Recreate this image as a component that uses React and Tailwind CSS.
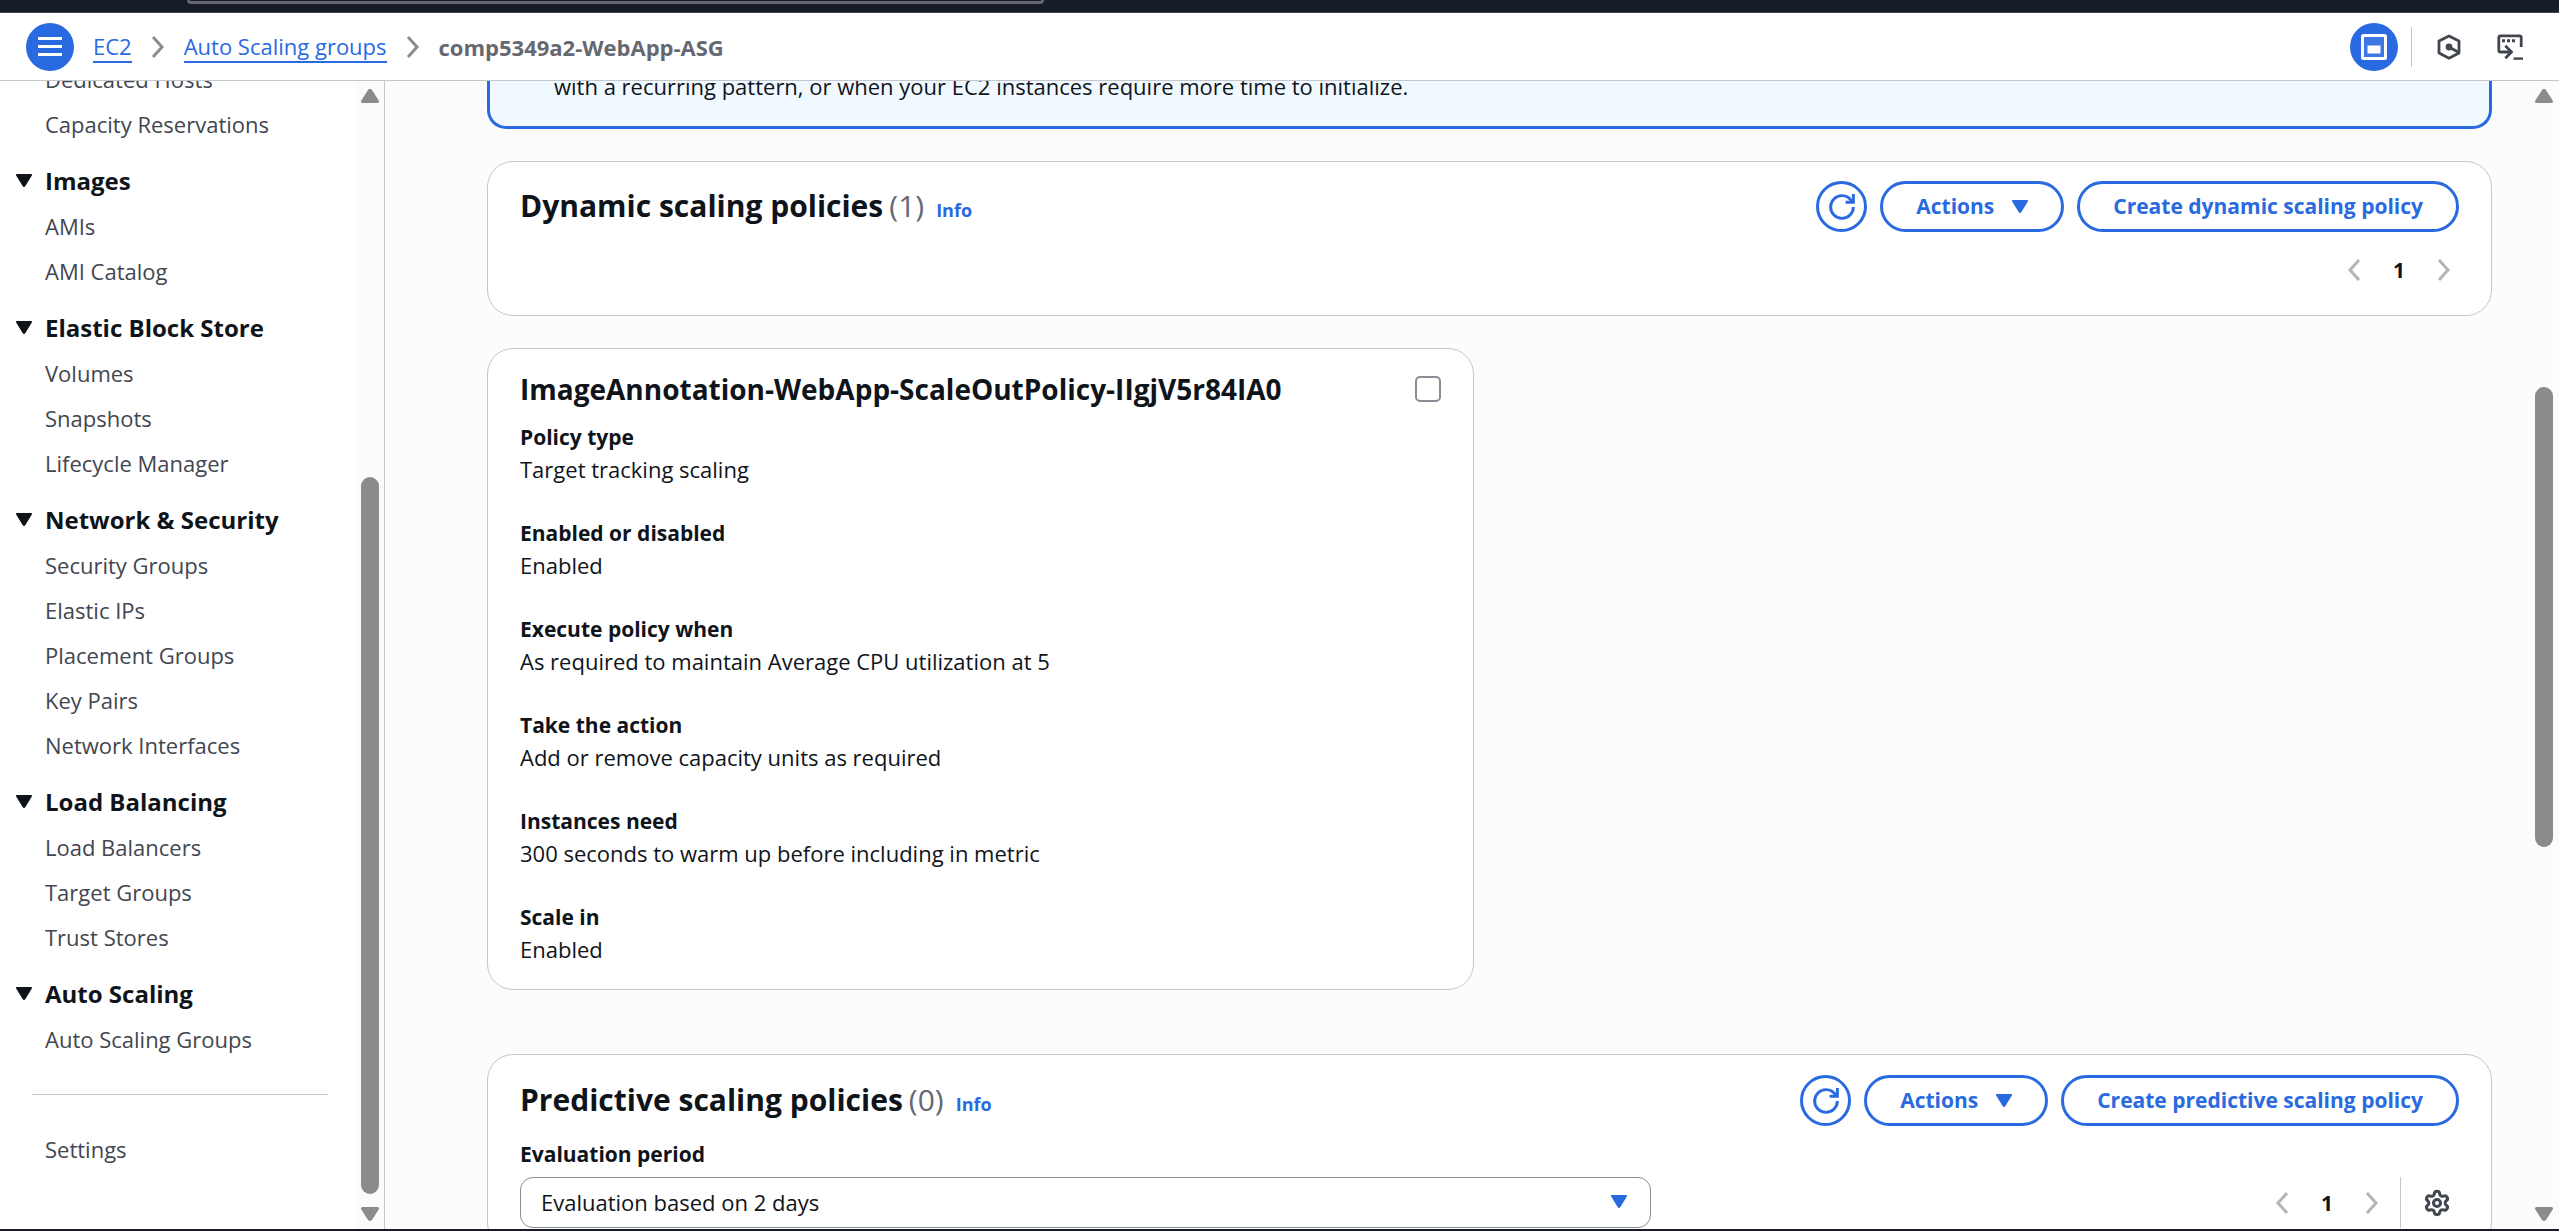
import { Settings } from "lucide-react";

const groups = [
  { title: "Images", items: ["AMIs", "AMI Catalog"] },
  { title: "Elastic Block Store", items: ["Volumes", "Snapshots", "Lifecycle Manager"] },
  {
    title: "Network & Security",
    items: ["Security Groups", "Elastic IPs", "Placement Groups", "Key Pairs", "Network Interfaces"],
  },
  { title: "Load Balancing", items: ["Load Balancers", "Target Groups", "Trust Stores"] },
  { title: "Auto Scaling", items: ["Auto Scaling Groups"] },
];

const policy = [
  ["Policy type", "Target tracking scaling"],
  ["Enabled or disabled", "Enabled"],
  ["Execute policy when", "As required to maintain Average CPU utilization at 5"],
  ["Take the action", "Add or remove capacity units as required"],
  ["Instances need", "300 seconds to warm up before including in metric"],
  ["Scale in", "Enabled"],
];

function Caret({ className = "" }) {
  return (
    <svg viewBox="0 0 16 13" className={`h-[13px] w-4 shrink-0 fill-current ${className}`} aria-hidden="true">
      <path d="M1 0h14c.9 0 1.3 1 .7 1.7L9.4 12c-.7 1.2-2.1 1.2-2.8 0L.3 1.7C-.3 1 .1 0 1 0z" />
    </svg>
  );
}

function Chevron({ left = false, className = "" }) {
  return (
    <svg
      viewBox="0 0 14 22"
      className={`h-[22px] w-3.5 shrink-0 fill-none stroke-current ${className}`}
      strokeWidth="3"
      aria-hidden="true"
    >
      <path d={left ? "M12 1L3 11l9 10" : "M2 1l9 10-9 10"} />
    </svg>
  );
}

function RefreshIcon() {
  return (
    <svg viewBox="0 0 16 16" className="size-[26px] fill-none stroke-current" strokeWidth="1.8" aria-hidden="true">
      <path d="M15 8a7 7 0 1 1-7-7c2.9 0 5 1.5 6.4 4" />
      <path d="M10.2 5.1H15V0" />
    </svg>
  );
}

function PanelIcon() {
  return (
    <svg viewBox="0 0 26 26" className="size-[26px]" aria-hidden="true">
      <rect x="1.5" y="1.5" width="23" height="23" rx="1" fill="#3f78e4" stroke="#fff" strokeWidth="3" />
      <rect x="6.5" y="11.5" width="13" height="8" fill="#fff" />
    </svg>
  );
}

function HexagonIcon() {
  return (
    <svg viewBox="0 0 24 26" className="h-[26px] w-6 fill-none stroke-current" strokeWidth="2.8" aria-hidden="true">
      <path d="M12 2l10 5v12l-10 5.2L2 19V7z" strokeLinejoin="round" />
      <circle cx="12" cy="13" r="3.4" className="fill-current stroke-none" />
      <path d="M12 13l9 5" strokeWidth="2.6" />
    </svg>
  );
}

function CloudShellIcon() {
  return (
    <svg viewBox="0 0 26 26" className="size-[26px] fill-none stroke-current" strokeWidth="2.8" aria-hidden="true">
      <path d="M24.2 13V3.4c0-1-.6-1.6-1.6-1.6H3.4c-1 0-1.6.6-1.6 1.6v13c0 1 .6 1.6 1.6 1.6H15" />
      <path d="M8.3 11.8l6.2 6.2-6.2 6.2" />
      <path d="M16.5 24.6H26" strokeWidth="2.4" />
      <path d="M5 6.7h3M10 6.7h3M15 6.7h3" strokeWidth="3" />
    </svg>
  );
}

function ScrollArrow({ down = false }) {
  return (
    <svg viewBox="0 0 18 14" className="h-3.5 w-[18px] shrink-0 fill-[#8b8b8b]" aria-hidden="true">
      <path
        d={
          down
            ? "M1.5 0h15c1.3 0 1.9 1.5 1.2 2.6l-6.4 10c-1.1 1.8-3.5 1.8-4.6 0L.3 2.6C-.4 1.5.2 0 1.5 0z"
            : "M1.5 14h15c1.3 0 1.9-1.5 1.2-2.6l-6.4-10c-1.1-1.8-3.5-1.8-4.6 0l-6.4 10C-.4 12.5.2 14 1.5 14z"
        }
      />
    </svg>
  );
}

function NavLink({ children }) {
  return (
    <li>
      <a href="#" className="block pl-[45px] text-[22px] leading-[45px] text-[#424650]">
        {children}
      </a>
    </li>
  );
}

function OutlineButton({ children }) {
  return (
    <button
      type="button"
      className="flex h-[51px] items-center gap-[18px] rounded-full border-[3px] border-[#2a6ae0] bg-white px-[33px] text-[21px] font-bold whitespace-nowrap text-[#2a6ae0]"
    >
      {children}
    </button>
  );
}

function Pagination() {
  return (
    <nav aria-label="Pagination" className="flex items-center gap-8 px-2 text-[#b4b4bb]">
      <button type="button" aria-label="Previous page" disabled>
        <Chevron left />
      </button>
      <span className="text-[21px] leading-8 font-bold text-[#0f141a]">1</span>
      <button type="button" aria-label="Next page" disabled>
        <Chevron />
      </button>
    </nav>
  );
}

function PolicyHeader({ title, count, create }) {
  return (
    <div className="flex items-center justify-between gap-8">
      <h2 className="flex items-baseline pb-0.5 text-[30px] leading-9 font-bold text-[#0f141a]">
        {title}
        <span className="ml-1.5 font-normal text-[#656871]">({count})</span>
        <a href="#" className="ml-3 text-lg font-bold text-[#2a6ae0]">
          Info
        </a>
      </h2>
      <div className="flex items-center gap-[13px]">
        <button
          type="button"
          aria-label="Refresh"
          className="flex size-[51px] items-center justify-center rounded-full border-[3px] border-[#2a6ae0] bg-white text-[#2a6ae0]"
        >
          <RefreshIcon />
        </button>
        <OutlineButton>
          Actions
          <Caret />
        </OutlineButton>
        <OutlineButton>{create}</OutlineButton>
      </div>
    </div>
  );
}

function Sidebar() {
  return (
    <aside className="flex w-[385px] shrink-0 border-r border-[#c6c6cd] bg-white">
      <nav aria-label="EC2" className="flex min-w-0 flex-1 flex-col justify-end overflow-hidden pb-[57px]">
        <ul>
          <NavLink>Dedicated Hosts</NavLink>
          <NavLink>Capacity Reservations</NavLink>
        </ul>
        {groups.map((g) => (
          <section key={g.title} className="pt-[11px]">
            <button
              type="button"
              aria-expanded="true"
              className="mb-px flex items-center gap-[13px] pl-4 text-2xl leading-[45px] font-bold text-[#0f141a]"
            >
              <Caret />
              {g.title}
            </button>
            <ul>
              {g.items.map((item) => (
                <NavLink key={item}>{item}</NavLink>
              ))}
            </ul>
          </section>
        ))}
        <hr className="mt-8 mr-[27px] mb-8 ml-8 border-[#c6c6cd]" />
        <ul>
          <NavLink>Settings</NavLink>
        </ul>
      </nav>
      <div className="flex w-[29px] shrink-0 flex-col items-center bg-[#fbfbfb] py-2" aria-hidden="true">
        <ScrollArrow />
        <div className="grow-[374]" />
        <div className="w-[18px] grow-[716] rounded-full bg-[#8b8b8b]" />
        <div className="h-[13px]" />
        <ScrollArrow down />
      </div>
    </aside>
  );
}

export default function App() {
  return (
    <div className="flex h-screen flex-col overflow-hidden bg-[#fcfcfc] font-['Open_Sans',sans-serif] text-[#0f141a]">
      <div className="h-[13px] shrink-0 border-b border-[#424650] bg-[#161d26] pl-[187px]">
        <div className="h-1 w-[857px] rounded-b-md border-[3px] border-t-0 border-[#656871]" />
      </div>

      <header className="flex h-[68px] shrink-0 items-center justify-between border-b border-[#c6c6cd] bg-white pr-9 pl-[26px]">
        <div className="flex items-center">
          <button
            type="button"
            aria-label="Open navigation"
            className="flex size-12 items-center justify-center rounded-full bg-[#2a6ae0]"
          >
            <svg viewBox="0 0 24 20" className="h-5 w-6 fill-white" aria-hidden="true">
              <path d="M0 0h24v3H0zM0 8h24v3H0zM0 16h24v3H0z" />
            </svg>
          </button>
          <nav aria-label="Breadcrumbs" className="ml-[19px] flex items-center gap-[19px] text-[22px] leading-[30px]">
            <a href="#" className="border-b-2 border-[#2a6ae0] text-[#2a6ae0]">EC2</a>
            <Chevron className="text-[#8c8c94]" />
            <a href="#" className="border-b-2 border-[#2a6ae0] text-[#2a6ae0]">Auto Scaling groups</a>
            <Chevron className="text-[#8c8c94]" />
            <span className="font-bold text-[#656871]">comp5349a2-WebApp-ASG</span>
          </nav>
        </div>
        <div className="flex items-center text-[#424650]">
          <button
            type="button"
            aria-label="Split panel"
            className="flex size-12 items-center justify-center rounded-full bg-[#2a6ae0]"
          >
            <PanelIcon />
          </button>
          <div className="mr-[25px] ml-[13px] h-10 w-px bg-[#c6c6cd]" />
          <button type="button" aria-label="Amazon Q">
            <HexagonIcon />
          </button>
          <button type="button" aria-label="CloudShell" className="ml-9">
            <CloudShellIcon />
          </button>
        </div>
      </header>

      <div className="flex min-h-0 flex-1">
        <Sidebar />

        <main className="min-w-0 flex-1 overflow-hidden pr-[37px] pl-[102px]">
          <div className="-mt-[11px] rounded-b-[19px] border-[3px] border-t-0 border-[#2a6ae0] bg-[#f0f9ff] px-16 pb-6 text-[22px] leading-8">
            with a recurring pattern, or when your EC2 instances require more time to initialize.
          </div>

          <section className="mt-8 rounded-[26px] border border-[#c6c6cd] bg-white px-8 pt-[19px] pb-5">
            <PolicyHeader title="Dynamic scaling policies" count={1} create="Create dynamic scaling policy" />
            <div className="mt-3 flex h-[51px] items-center justify-end">
              <Pagination />
            </div>
          </section>

          <div className="mt-8 grid grid-cols-2 gap-8">
            <article className="rounded-[26px] border border-[#c6c6cd] bg-white px-8 pt-[22px] pb-6">
              <div className="flex items-start justify-between">
                <h3 className="text-[28px] leading-9 font-bold">
                  <label htmlFor="select-policy">ImageAnnotation-WebApp-ScaleOutPolicy-IIgjV5r84IA0</label>
                </h3>
                <input
                  id="select-policy"
                  type="checkbox"
                  className="mt-[5px] size-[26px] appearance-none rounded-[5px] border-2 border-[#8c8c94] bg-white"
                />
              </div>
              <dl className="mt-3.5 flex flex-col gap-8 text-[22px] leading-8">
                {policy.map(([term, value]) => (
                  <div key={term}>
                    <dt className="text-[21px] font-bold">{term}</dt>
                    <dd>{value}</dd>
                  </div>
                ))}
              </dl>
            </article>
          </div>

          <section className="mt-16 rounded-[26px] border border-[#c6c6cd] bg-white px-8 py-5">
            <PolicyHeader title="Predictive scaling policies" count={0} create="Create predictive scaling policy" />
            <div className="mt-3 flex items-end justify-between">
              <div className="w-7/12">
                <label htmlFor="evaluation-period" className="block text-[21px] leading-8 font-bold">
                  Evaluation period
                </label>
                <div className="relative mt-[7px]">
                  <select
                    id="evaluation-period"
                    className="block h-[51px] w-full appearance-none rounded-[13px] border border-[#8c8c94] bg-white px-5 text-[22px]"
                  >
                    <option>Evaluation based on 2 days</option>
                  </select>
                  <Caret className="pointer-events-none absolute top-[18px] right-6 text-[#2a6ae0]" />
                </div>
              </div>
              <div className="flex h-[51px] items-center">
                <Pagination />
                <div className="ml-[13px] h-full w-px bg-[#c6c6cd]" />
                <button type="button" aria-label="Preferences" className="mr-2 ml-[22px] text-[#424650]">
                  <Settings size={28} strokeWidth={2.6} />
                </button>
              </div>
            </div>
          </section>
        </main>

        <div className="flex w-[30px] shrink-0 flex-col items-center py-2" aria-hidden="true">
          <ScrollArrow />
          <div className="grow-[284]" />
          <div className="w-[18px] grow-[459] rounded-full bg-[#8b8b8b]" />
          <div className="grow-[360]" />
          <ScrollArrow down />
        </div>
      </div>

      <div className="h-0.5 shrink-0 bg-[#161d26]" />
    </div>
  );
}
